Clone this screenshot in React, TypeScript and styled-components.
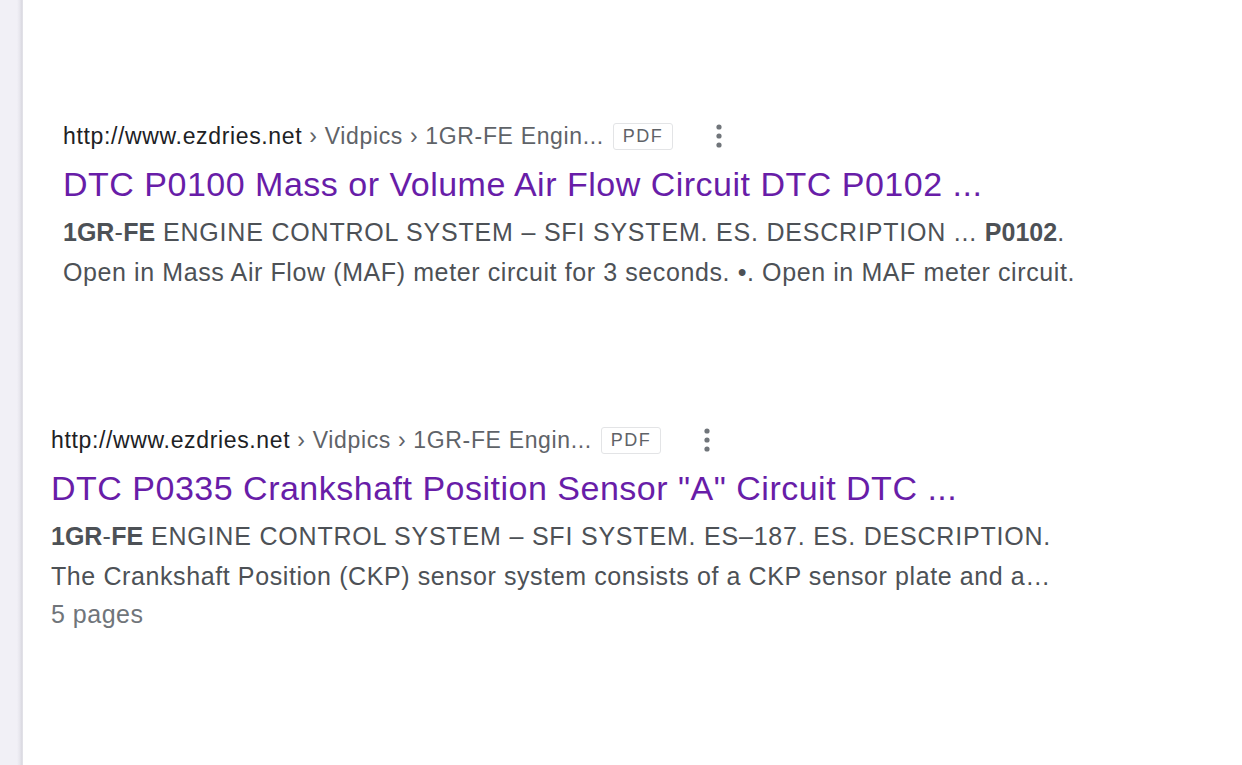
import React from "react";
import styled, { createGlobalStyle } from "styled-components";

const Global = createGlobalStyle`
  html, body { margin: 0; padding: 0; background: #ffffff; }
  body { font-family: "Liberation Sans", Arial, sans-serif; }
`;

const Page = styled.div`
  display: flex;
  width: 1242px;
  height: 765px;
  overflow: hidden;
  background: #ffffff;
`;

const Rail = styled.div`
  width: 23px;
  flex: none;
  background: linear-gradient(to right, #f1f0f6 0px, #f1f0f6 17px, #e6e5ec 20px, #d9d8e0 22px, #e9e9ee 23px);
`;

const Main = styled.main`
  flex: 1;
  display: flex;
  flex-direction: column;
  gap: 133px;
  padding-top: 121px;
`;

const Result = styled.article<{ $indent: number }>`
  display: flex;
  flex-direction: column;
  padding-left: ${(p) => p.$indent}px;
`;

const UrlRow = styled.div`
  display: flex;
  align-items: center;
  height: 30px;
  font-size: 23px;
  letter-spacing: 0.65px;
  white-space: nowrap;
`;

const Domain = styled.span`
  color: #202124;
`;

const Crumbs = styled.span`
  color: #5f6368;
`;

const Badge = styled.span`
  display: inline-flex;
  align-items: center;
  justify-content: center;
  box-sizing: border-box;
  height: 27px;
  padding: 0 9px;
  margin-left: 9px;
  border: 1px solid #e3e4e6;
  border-radius: 3px;
  font-size: 18px;
  letter-spacing: 1.4px;
  color: #5f6368;
`;

const More = styled.span`
  display: inline-flex;
  margin-left: 42px;
  color: #70757a;
`;

const Title = styled.a`
  display: block;
  margin-top: 13px;
  font-size: 34px;
  letter-spacing: 0.5px;
  line-height: 40px;
  color: #681da8;
  text-decoration: none;
  white-space: nowrap;
`;

const Snippet = styled.div`
  margin-top: 8px;
  font-size: 25px;
  letter-spacing: 0.6px;
  line-height: 40px;
  color: #4d5156;
  white-space: nowrap;

  b {
    font-weight: bold;
    letter-spacing: 0;
    color: #4d5156;
  }
`;

const Caps = styled.span`
  letter-spacing: 0.8px;
`;

const Meta = styled.div`
  font-size: 25px;
  letter-spacing: 0.5px;
  line-height: 36px;
  color: #70757a;
`;

const Dots = () => (
  <More>
    <svg width="8" height="26" viewBox="0 0 8 26" fill="currentColor">
      <circle cx="4" cy="4" r="2.6" />
      <circle cx="4" cy="13" r="2.6" />
      <circle cx="4" cy="22" r="2.6" />
    </svg>
  </More>
);

export default function App() {
  return (
    <>
      <Global />
      <Page>
        <Rail />
        <Main>
          <Result $indent={40}>
            <UrlRow>
              <Domain>http://www.ezdries.net</Domain>
              <Crumbs>&nbsp;› Vidpics › 1GR-FE Engin...</Crumbs>
              <Badge>PDF</Badge>
              <Dots />
            </UrlRow>
            <Title href="#">DTC P0100 Mass or Volume Air Flow Circuit DTC P0102 ...</Title>
            <Snippet>
              <b>1GR</b>-<b>FE</b>
              <Caps> ENGINE CONTROL SYSTEM – SFI SYSTEM. ES. DESCRIPTION ... </Caps>
              <b>P0102</b>.
              <br />
              Open in Mass Air Flow (MAF) meter circuit for 3 seconds. •. Open in MAF meter circuit.
            </Snippet>
          </Result>
          <Result $indent={28}>
            <UrlRow>
              <Domain>http://www.ezdries.net</Domain>
              <Crumbs>&nbsp;› Vidpics › 1GR-FE Engin...</Crumbs>
              <Badge>PDF</Badge>
              <Dots />
            </UrlRow>
            <Title href="#">DTC P0335 Crankshaft Position Sensor "A" Circuit DTC ...</Title>
            <Snippet>
              <b>1GR</b>-<b>FE</b>
              <Caps> ENGINE CONTROL SYSTEM – SFI SYSTEM. ES–187. ES. DESCRIPTION.</Caps>
              <br />
              The Crankshaft Position (CKP) sensor system consists of a CKP sensor plate and a…
            </Snippet>
            <Meta>5 pages</Meta>
          </Result>
        </Main>
      </Page>
    </>
  );
}
